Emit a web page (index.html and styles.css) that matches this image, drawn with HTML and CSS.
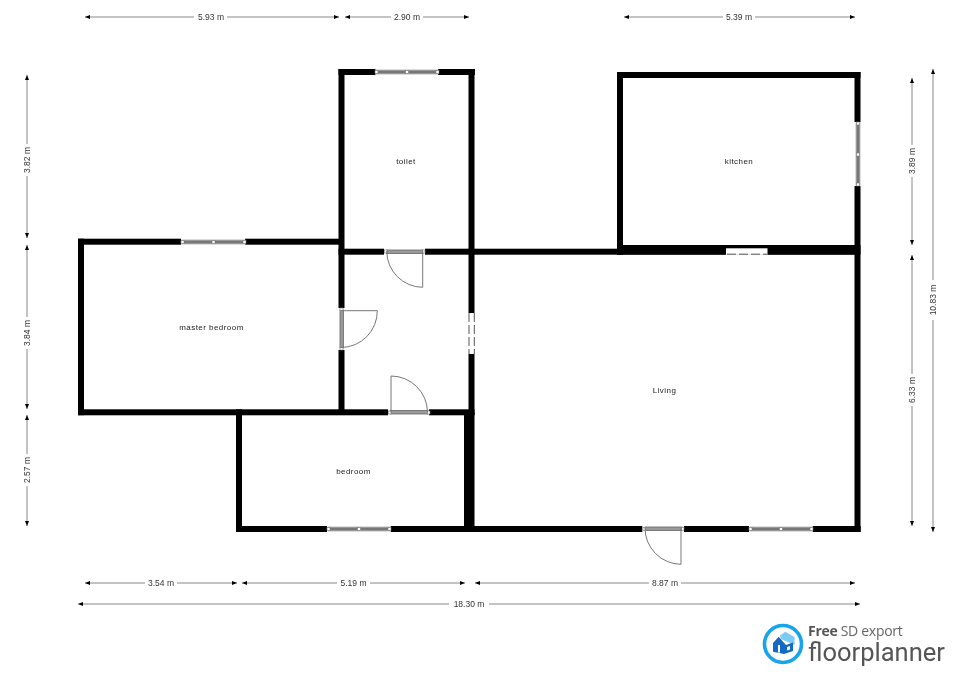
FILE: index.html
```html
<!DOCTYPE html>
<html>
<head>
    <title>Floor plan</title>
    <link rel="stylesheet" href="styles.css">
</head>
<body>
<svg class="plan" width="960" height="679" viewBox="0 0 960 679">
    <defs>
        <marker id="tip" markerWidth="6" markerHeight="6" refX="5" refY="2.5" orient="auto-start-reverse" markerUnits="userSpaceOnUse">
            <path class="tip" d="M0 0.5L5 2.5L0 4.5Z"/>
        </marker>
    </defs>

    <!-- walls -->
    <g class="wall">
        <!-- toilet -->
        <rect x="338.5" y="69" width="37" height="6"/>
        <rect x="438" y="69" width="37" height="6"/>
        <rect x="338.5" y="69" width="6" height="239"/>
        <rect x="338.5" y="350" width="6" height="65"/>
        <rect x="468.5" y="69" width="6" height="244"/>
        <rect x="468.5" y="354" width="6" height="61"/>
        <rect x="338.5" y="248.7" width="45.5" height="6"/>
        <rect x="425" y="248.7" width="435" height="6"/>
        <!-- kitchen -->
        <rect x="617" y="72" width="243.5" height="6"/>
        <rect x="617" y="72" width="6" height="183"/>
        <rect x="617" y="245" width="243.5" height="9.5"/>
        <rect x="854.5" y="72" width="6" height="50"/>
        <rect x="854.5" y="186" width="6" height="346"/>
        <!-- master bedroom -->
        <rect x="78" y="238.7" width="103" height="6"/>
        <rect x="245" y="238.7" width="94" height="6"/>
        <rect x="78" y="238.7" width="6" height="176.5"/>
        <rect x="78" y="409.3" width="310" height="6"/>
        <rect x="429" y="409.3" width="45.5" height="6"/>
        <!-- bedroom -->
        <rect x="236" y="409.3" width="6" height="122.7"/>
        <rect x="464" y="412" width="10.5" height="120"/>
        <rect x="236" y="526" width="91" height="6"/>
        <rect x="390.7" y="526" width="251.6" height="6"/>
        <rect x="684" y="526" width="65" height="6"/>
        <rect x="812.7" y="526" width="48" height="6"/>
    </g>

    <!-- open passages -->
    <rect class="gap" x="726" y="248.3" width="41.5" height="6.6"/>
    <path class="dash" d="M727 254.2H767.5"/>
    <path class="dash" d="M469 313V354M474.3 313V354"/>

    <!-- windows -->
    <g class="window">
        <rect x="376" y="70" width="62" height="4"/>
        <rect x="182" y="240" width="63" height="4"/>
        <rect x="856" y="123" width="4" height="62"/>
        <rect x="328" y="527" width="62" height="4"/>
        <rect x="750" y="527" width="62" height="4"/>
    </g>
    <g class="node">
        <rect x="375" y="70.5" width="3" height="3"/><rect x="405.5" y="70.5" width="3" height="3"/><rect x="436" y="70.5" width="3" height="3"/>
        <rect x="181" y="240.5" width="3" height="3"/><rect x="212" y="240.5" width="3" height="3"/><rect x="243" y="240.5" width="3" height="3"/>
        <rect x="856.5" y="122" width="3" height="3"/><rect x="856.5" y="153" width="3" height="3"/><rect x="856.5" y="183" width="3" height="3"/>
        <rect x="327" y="527.5" width="3" height="3"/><rect x="357.5" y="527.5" width="3" height="3"/><rect x="388" y="527.5" width="3" height="3"/>
        <rect x="749" y="527.5" width="3" height="3"/><rect x="779.5" y="527.5" width="3" height="3"/><rect x="810" y="527.5" width="3" height="3"/>
    </g>

    <!-- doors -->
    <g class="door-frame">
        <rect x="386.5" y="250" width="36.5" height="3.5"/>
        <rect x="340" y="310" width="3.5" height="38"/>
        <rect x="390.5" y="410.5" width="37.5" height="3.5"/>
        <rect x="645" y="527" width="37" height="3.5"/>
    </g>
    <g class="node">
        <rect x="384.5" y="250" width="2.5" height="3"/><rect x="422.5" y="250" width="2.5" height="3"/>
        <rect x="340" y="308" width="3" height="2.5"/><rect x="340" y="347.5" width="3" height="2.5"/>
        <rect x="388.5" y="411" width="2.5" height="3"/><rect x="427.5" y="411" width="2.5" height="3"/>
        <rect x="643" y="527.5" width="2.5" height="3"/><rect x="681.5" y="527.5" width="2.5" height="3"/>
    </g>
    <g class="swing">
        <path d="M422.7 251V287.3A36.3 36.3 0 0 1 386.7 251"/>
        <path d="M341 310.7H377.3A36.5 36.5 0 0 1 341 347.5"/>
        <path d="M391 412V376A36.5 36.5 0 0 1 427.5 412"/>
        <path d="M681 528V564.3A36.3 36.3 0 0 1 645 528"/>
    </g>

    <!-- room names -->
    <g class="room">
        <text x="406" y="164">toilet</text>
        <text x="739" y="164">kitchen</text>
        <text x="211.5" y="330">master bedroom</text>
        <text x="664.5" y="393">Living</text>
        <text x="353.5" y="473.5">bedroom</text>
    </g>

    <!-- dimensions -->
    <g class="dim">
        <path marker-start="url(#tip)" d="M85 17H194"/><path marker-end="url(#tip)" d="M227 17H339"/>
        <path marker-start="url(#tip)" d="M345 17H391"/><path marker-end="url(#tip)" d="M423 17H469"/>
        <path marker-start="url(#tip)" d="M624 17H723"/><path marker-end="url(#tip)" d="M755 17H855"/>
        <path marker-start="url(#tip)" d="M85 583H145"/><path marker-end="url(#tip)" d="M177 583H237"/>
        <path marker-start="url(#tip)" d="M242 583H337"/><path marker-end="url(#tip)" d="M370 583H465"/>
        <path marker-start="url(#tip)" d="M475 583H649"/><path marker-end="url(#tip)" d="M681 583H855"/>
        <path marker-start="url(#tip)" d="M78 604H449"/><path marker-end="url(#tip)" d="M489 604H860"/>
        <path marker-start="url(#tip)" d="M27 75V144"/><path marker-end="url(#tip)" d="M27 176V238"/>
        <path marker-start="url(#tip)" d="M27 245V317"/><path marker-end="url(#tip)" d="M27 349V409"/>
        <path marker-start="url(#tip)" d="M27 415V454"/><path marker-end="url(#tip)" d="M27 486V526"/>
        <path marker-start="url(#tip)" d="M912 78V145"/><path marker-end="url(#tip)" d="M912 177V245"/>
        <path marker-start="url(#tip)" d="M912 255V374"/><path marker-end="url(#tip)" d="M912 406V526"/>
        <path marker-start="url(#tip)" d="M933 69V280"/><path marker-end="url(#tip)" d="M933 320V532"/>
    </g>
    <g class="dim-label">
        <text x="211" y="20">5.93 m</text>
        <text x="407" y="20">2.90 m</text>
        <text x="739" y="20">5.39 m</text>
        <text x="161" y="586">3.54 m</text>
        <text x="353.5" y="586">5.19 m</text>
        <text x="665" y="586">8.87 m</text>
        <text x="469" y="607">18.30 m</text>
        <text transform="translate(30 160) rotate(-90)">3.82 m</text>
        <text transform="translate(30 333) rotate(-90)">3.84 m</text>
        <text transform="translate(30 470) rotate(-90)">2.57 m</text>
        <text transform="translate(915 161) rotate(-90)">3.89 m</text>
        <text transform="translate(915 390) rotate(-90)">6.33 m</text>
        <text transform="translate(936 300) rotate(-90)">10.83 m</text>
    </g>

    <!-- export badge -->
    <circle class="logo-ring" cx="783" cy="644" r="18.5"/>
    <path class="logo-back" d="M785.3 631.7L794.5 637V645L781 639L780 635.5Z"/>
    <path class="logo-front" d="M778.7 636.7L773 643V651.7L784 654L793 651V642.5L786 645Z"/>
    <path class="logo-cut" d="M778 645H780V652.5H778ZM787 647L790 646V649.5L787 650.5Z"/>
    <text class="logo-small" x="808" y="636"><tspan class="logo-bold">Free</tspan> SD export</text>
    <text class="logo-name" x="808" y="660.5">floorplanner</text>
</svg>
</body>
</html>
```

FILE: styles.css
```css
* { margin: 0; padding: 0; box-sizing: border-box; }
html, body { background: #fff; overflow: hidden; }
.plan { display: block; filter: blur(0.35px); }

.wall rect { fill: #000; }
.gap { fill: #fff; }
.dash { fill: none; stroke: #555; stroke-width: 1; stroke-dasharray: 9 3; }

.window rect { fill: #777; stroke: #bbb; stroke-width: 1; }
.door-frame rect { fill: #999; stroke: #666; stroke-width: 0.8; }
.node rect { fill: #fff; stroke: #777; stroke-width: 0.6; }
.swing path { fill: none; stroke: #777; stroke-width: 1; }

.room text {
    font: 8px "Liberation Sans", Arial, sans-serif;
    letter-spacing: 0.45px;
    text-anchor: middle;
    fill: #222;
}

.dim path { fill: none; stroke: #888; stroke-width: 1; }
.tip { fill: #000; }
.dim-label text {
    font: 8.5px "Liberation Sans", Arial, sans-serif;
    text-anchor: middle;
    fill: #333;
}

.logo-ring { fill: #fff; stroke: #17a4ec; stroke-width: 3.6; }
.logo-back { fill: #7ccbf2; }
.logo-front { fill: #1469c4; }
.logo-cut { fill: #fff; }
.logo-small { font: 14px "Open Sans", sans-serif; letter-spacing: -0.3px; fill: #666; }
.logo-bold { font-weight: 700; fill: #555; }
.logo-name { font: 400 25.5px Roboto, sans-serif; letter-spacing: 0; fill: #555; }
```
